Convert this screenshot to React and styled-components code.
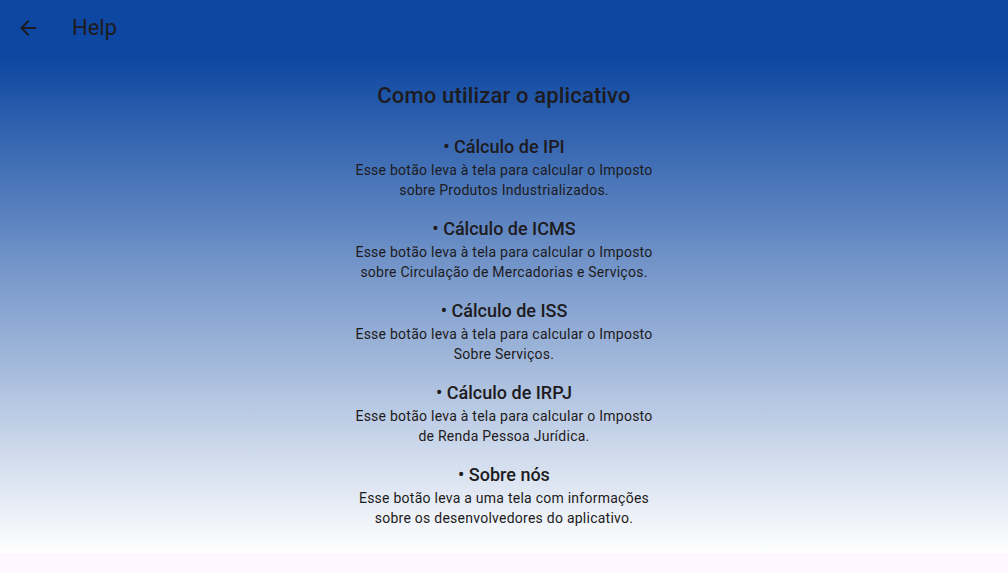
import styled, { createGlobalStyle } from 'styled-components';

const topics = [
  {
    title: 'Cálculo de IPI',
    text: ['Esse botão leva à tela para calcular o Imposto', 'sobre Produtos Industrializados.'],
  },
  {
    title: 'Cálculo de ICMS',
    text: ['Esse botão leva à tela para calcular o Imposto', 'sobre Circulação de Mercadorias e Serviços.'],
  },
  {
    title: 'Cálculo de ISS',
    text: ['Esse botão leva à tela para calcular o Imposto', 'Sobre Serviços.'],
  },
  {
    title: 'Cálculo de IRPJ',
    text: ['Esse botão leva à tela para calcular o Imposto', 'de Renda Pessoa Jurídica.'],
  },
  {
    title: 'Sobre nós',
    text: ['Esse botão leva a uma tela com informações', 'sobre os desenvolvedores do aplicativo.'],
  },
];

const App = () => {
  return (
    <>
      <GlobalStyle />
      <Page>
        <AppBar>
          <BackButton aria-label="Back">
            <svg width="24" height="24" viewBox="0 0 24 24">
              <path d="M20 11H7.83l5.59-5.59L12 4l-8 8 8 8 1.41-1.41L7.83 13H20v-2z" fill="#1d1b20" />
            </svg>
          </BackButton>
          <BarTitle>Help</BarTitle>
        </AppBar>
        <Body>
          <Heading>Como utilizar o aplicativo</Heading>
          <TopicList>
            {topics.map((topic) => (
              <Topic key={topic.title}>
                <TopicTitle>• {topic.title}</TopicTitle>
                <TopicText>
                  {topic.text.map((line) => (
                    <span key={line}>{line}</span>
                  ))}
                </TopicText>
              </Topic>
            ))}
          </TopicList>
        </Body>
      </Page>
    </>
  );
};

const GlobalStyle = createGlobalStyle`
  html, body {
    margin: 0;
    padding: 0;
    background: #fef7ff;
    font-family: Roboto, "Liberation Sans", sans-serif;
    color: #1d1b20;
  }
`;

const Page = styled.div`
  width: 1008px;
  height: 573px;
  display: flex;
  flex-direction: column;
  background: #fef7ff;
  overflow: hidden;
`;

const AppBar = styled.header`
  height: 56px;
  flex-shrink: 0;
  display: flex;
  align-items: center;
  padding: 0 16px;
  background: #0d47a1;
`;

const BackButton = styled.button`
  width: 24px;
  height: 24px;
  padding: 0;
  border: none;
  background: none;
  display: flex;
  align-items: center;
  justify-content: center;
  margin-right: 32px;
`;

const BarTitle = styled.h1`
  margin: 0;
  font-size: 22px;
  font-weight: 400;
  line-height: 28px;
`;

const Body = styled.main`
  height: 497px;
  box-sizing: border-box;
  padding-top: 26px;
  display: flex;
  flex-direction: column;
  align-items: center;
  background: linear-gradient(to bottom, #0d47a1 0%, #ffffff 100%);
`;

const Heading = styled.h2`
  margin: 0 0 24px;
  font-size: 22px;
  font-weight: 500;
  line-height: 28px;
  letter-spacing: 0.15px;
`;

const TopicList = styled.div`
  display: flex;
  flex-direction: column;
  align-items: center;
  gap: 16px;
`;

const Topic = styled.section`
  display: flex;
  flex-direction: column;
  align-items: center;
  text-align: center;
`;

const TopicTitle = styled.h3`
  margin: 0;
  font-size: 18px;
  font-weight: 500;
  line-height: 26px;
`;

const TopicText = styled.p`
  margin: 0;
  display: flex;
  flex-direction: column;
  font-size: 14px;
  line-height: 20px;
  letter-spacing: 0.25px;
`;

export default App;
